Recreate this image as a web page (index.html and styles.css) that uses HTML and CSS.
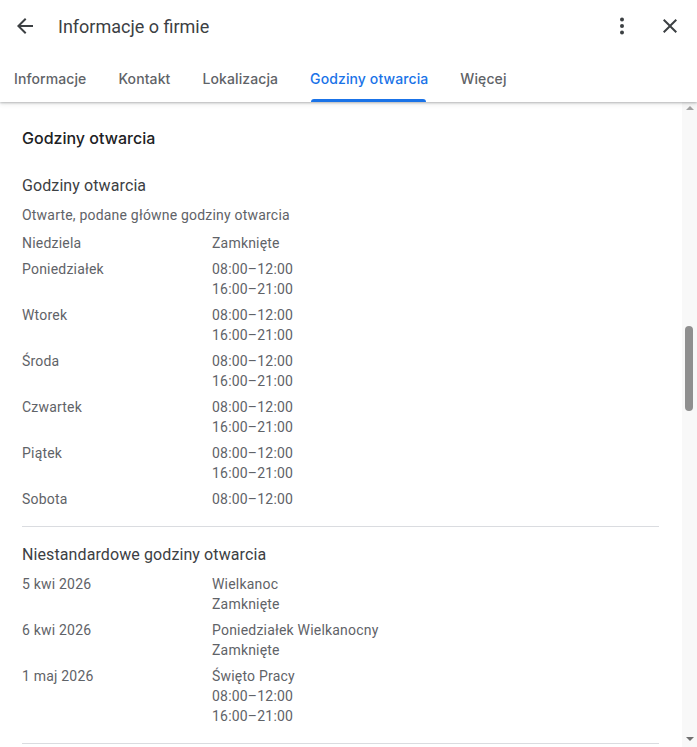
FILE: index.html
```html
<!DOCTYPE html>
<html lang="pl">
<head>
  <meta charset="UTF-8">
  <title>Informacje o firmie</title>
  <link rel="stylesheet" href="styles.css">
</head>
<body>

<div class="dialog">
  <div class="header">
    <div class="topbar">
      <button class="icon-btn back">
        <svg viewBox="0 0 24 24" width="24" height="24"><path d="M20 11H7.83l5.59-5.59L12 4l-8 8 8 8 1.41-1.41L7.83 13H20v-2z" fill="#3c4043"/></svg>
      </button>
      <div class="title">Informacje o firmie</div>
      <button class="icon-btn more">
        <svg viewBox="0 0 24 24" width="24" height="24"><circle cx="12" cy="5.5" r="2" fill="#3c4043"/><circle cx="12" cy="12" r="2" fill="#3c4043"/><circle cx="12" cy="18.5" r="2" fill="#3c4043"/></svg>
      </button>
      <button class="icon-btn close">
        <svg viewBox="0 0 24 24" width="24" height="24"><path d="M19 6.41L17.59 5 12 10.59 6.41 5 5 6.41 10.59 12 5 17.59 6.41 19 12 13.41 17.59 19 19 17.59 13.41 12z" fill="#3c4043"/></svg>
      </button>
    </div>
    <div class="tabs">
      <div class="tab">Informacje</div>
      <div class="tab">Kontakt</div>
      <div class="tab">Lokalizacja</div>
      <div class="tab active">Godziny otwarcia</div>
      <div class="tab">Więcej</div>
    </div>
  </div>

  <div class="body">
    <div class="content">
      <h2 class="heading">Godziny otwarcia</h2>

      <div class="section">
        <h3 class="subheading">Godziny otwarcia</h3>
        <div class="note">Otwarte, podane główne godziny otwarcia</div>
        <div class="rows">
          <div class="row"><div class="label">Niedziela</div><div class="value">Zamknięte</div></div>
          <div class="row"><div class="label">Poniedziałek</div><div class="value">08:00–12:00<br>16:00–21:00</div></div>
          <div class="row"><div class="label">Wtorek</div><div class="value">08:00–12:00<br>16:00–21:00</div></div>
          <div class="row"><div class="label">Środa</div><div class="value">08:00–12:00<br>16:00–21:00</div></div>
          <div class="row"><div class="label">Czwartek</div><div class="value">08:00–12:00<br>16:00–21:00</div></div>
          <div class="row"><div class="label">Piątek</div><div class="value">08:00–12:00<br>16:00–21:00</div></div>
          <div class="row"><div class="label">Sobota</div><div class="value">08:00–12:00</div></div>
        </div>
      </div>

      <div class="section special">
        <h3 class="subheading">Niestandardowe godziny otwarcia</h3>
        <div class="rows">
          <div class="row"><div class="label">5 kwi 2026</div><div class="value">Wielkanoc<br>Zamknięte</div></div>
          <div class="row"><div class="label">6 kwi 2026</div><div class="value">Poniedziałek Wielkanocny<br>Zamknięte</div></div>
          <div class="row"><div class="label">1 maj 2026</div><div class="value">Święto Pracy<br>08:00–12:00<br>16:00–21:00</div></div>
        </div>
      </div>
    </div>

    <div class="scrollbar">
      <div class="arrow up"></div>
      <div class="track"><div class="thumb"></div></div>
      <div class="arrow down"></div>
    </div>
  </div>
</div>

</body>
</html>
```

FILE: styles.css
```css
html, body {
  margin: 0;
  padding: 0;
}

body {
  width: 697px;
  height: 747px;
  overflow: hidden;
  background: #fff;
  font-family: Roboto, 'Noto Sans', Arial, sans-serif;
  color: #3c4043;
}

.dialog {
  display: flex;
  flex-direction: column;
  height: 747px;
}

.header {
  position: relative;
  z-index: 1;
  height: 102px;
  background: #fff;
  box-shadow: 0 1px 2px rgba(60,64,67,0.3), 0 2px 5px rgba(60,64,67,0.12);
}

.topbar {
  display: flex;
  align-items: center;
  height: 52px;
  padding: 0 15px 0 13px;
}

.icon-btn {
  display: flex;
  align-items: center;
  justify-content: center;
  width: 24px;
  height: 24px;
  padding: 0;
  border: none;
  background: none;
  cursor: pointer;
}

.title {
  flex: 1;
  margin-left: 21px;
  font-size: 18px;
  color: #3c4043;
}

.more {
  margin-right: 24px;
}

.tabs {
  display: flex;
  gap: 32px;
  height: 50px;
  padding-left: 14px;
}

.tab {
  display: flex;
  align-items: center;
  position: relative;
  height: 50px;
  padding-top: 2px;
  box-sizing: border-box;
  font-family: Inter, Roboto, sans-serif;
  font-size: 14px;
  font-weight: 500;
  color: #5f6368;
  letter-spacing: 0.1px;
}

.tab.active {
  color: #1a73e8;
}

.tab.active::after {
  content: '';
  position: absolute;
  left: 1px;
  right: 2px;
  bottom: 0;
  height: 3px;
  border-radius: 3px 3px 0 0;
  background: #1a73e8;
}

.body {
  flex: 1;
  display: flex;
  min-height: 0;
}

.content {
  flex: 1;
  padding: 24px 23px 0 22px;
  overflow: hidden;
}

.heading {
  margin: 0 0 24px;
  font-family: Inter, Roboto, sans-serif;
  font-size: 16px;
  line-height: 24px;
  font-weight: 500;
  color: #202124;
}

.subheading {
  margin: 0 0 7px;
  font-size: 16px;
  line-height: 24px;
  font-weight: 400;
  color: #3c4043;
  letter-spacing: 0.1px;
}

.note {
  margin-bottom: 8px;
  font-size: 14px;
  line-height: 20px;
  color: #5f6368;
  letter-spacing: 0.2px;
}

.section {
  padding-bottom: 17px;
  border-bottom: 1px solid #dadce0;
}

.special {
  padding-top: 16px;
}

.rows {
  display: flex;
  flex-direction: column;
  gap: 6px;
}

.row {
  display: flex;
  font-size: 14px;
  line-height: 20px;
  color: #5f6368;
  letter-spacing: 0.2px;
}

.label {
  width: 190px;
}

.scrollbar {
  display: flex;
  flex-direction: column;
  width: 15px;
  background: #f8f8f8;
}

.arrow {
  height: 14px;
  display: flex;
  justify-content: center;
}

.arrow.up::before,
.arrow.down::before {
  content: '';
  width: 0;
  height: 0;
  border-left: 4px solid transparent;
  border-right: 4px solid transparent;
}

.arrow.up::before {
  margin-top: 4px;
  border-bottom: 4px solid #a3a3a3;
}

.arrow.down::before {
  margin-top: 4px;
  border-top: 4px solid #707070;
}

.track {
  flex: 1;
  padding-top: 210px;
}

.thumb {
  width: 8px;
  height: 85px;
  margin-left: 3px;
  border-radius: 4px;
  background: #8f8f8f;
}
```
